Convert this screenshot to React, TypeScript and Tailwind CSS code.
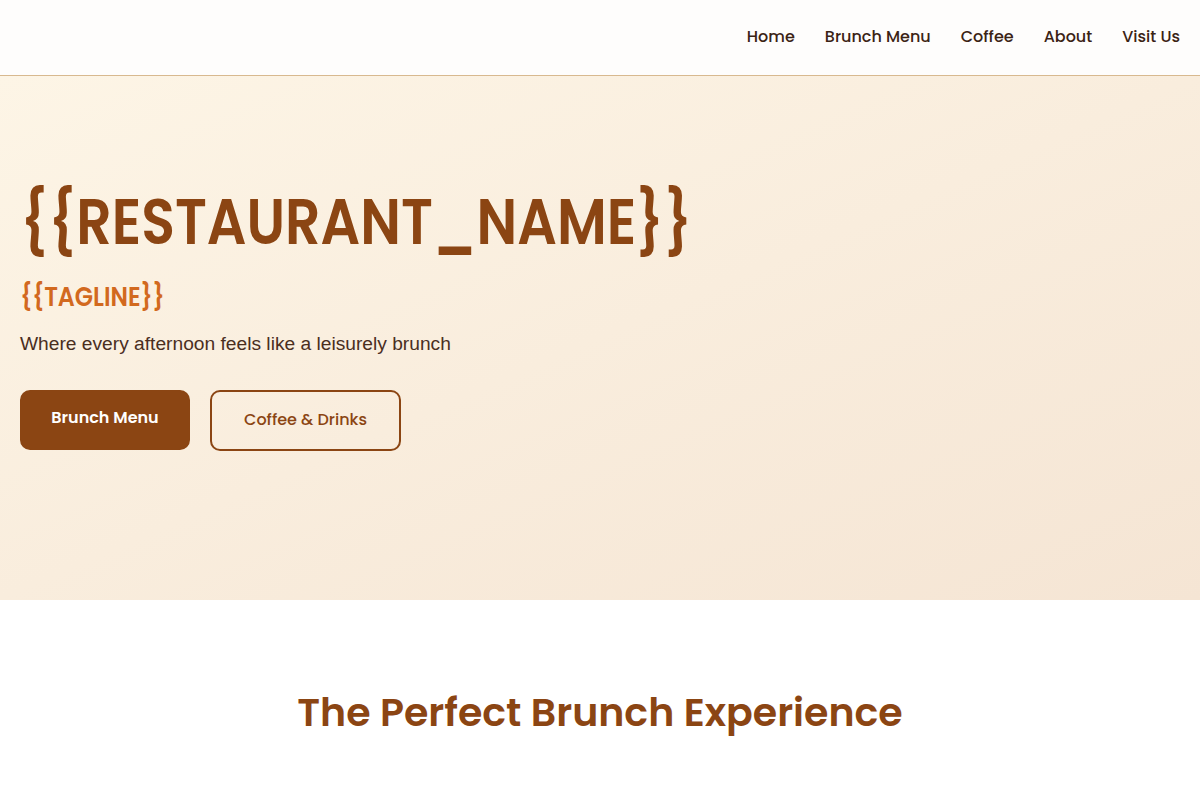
const nav = ["Home", "Brunch Menu", "Coffee", "About", "Visit Us"];

const display = "font-['Poppins','Inter',sans-serif]";

export default function App() {
  return (
    <div className="min-h-screen bg-white">
      <header className="flex h-[76px] items-center justify-end border-b border-[#d8b98f] bg-[#fefdfc] px-5 pb-[2px]">
        <nav className={`flex gap-[30px] ${display} text-[16px] font-medium text-[#3b2314]`}>
          {nav.map((n) => (
            <a key={n} href="#" className="leading-6">
              {n}
            </a>
          ))}
        </nav>
      </header>

      <section className="h-[524px] bg-gradient-to-br from-[#fdf5e6] to-[#f5e5d4] px-5 pt-[108px]">
        <h1
          className={`origin-left scale-x-[0.865] ${display} text-[64px] font-semibold leading-[1.2] text-[#8b4513]`}
        >
          {"{{RESTAURANT_NAME}}"}
        </h1>
        <p
          className={`mt-[18px] origin-left scale-x-[0.88] ${display} text-[27px] font-semibold leading-9 text-[#d2691e]`}
        >
          {"{{TAGLINE}}"}
        </p>
        <p className="mt-[15px] font-['Liberation_Sans',Arial,sans-serif] text-[19.2px] leading-7 text-[#4a2e1e]">
          Where every afternoon feels like a leisurely brunch
        </p>
        <div className={`mt-8 flex gap-5 ${display} text-[16px] font-semibold`}>
          <button className="h-[60px] w-[170px] rounded-[10px] border-2 border-[#8b4513] bg-[#8b4513] pb-[3px] text-white">
            Brunch Menu
          </button>
          <button className="h-[61px] w-[191px] rounded-[10px] border-2 border-[#8b4513] bg-transparent font-medium text-[#8b4513]">
            Coffee &amp; Drinks
          </button>
        </div>
      </section>

      <section className="bg-white pt-[89px]">
        <h2 className={`text-center ${display} text-[39.5px] font-semibold leading-[1.2] text-[#8b4513]`}>
          The Perfect Brunch Experience
        </h2>
      </section>
    </div>
  );
}
